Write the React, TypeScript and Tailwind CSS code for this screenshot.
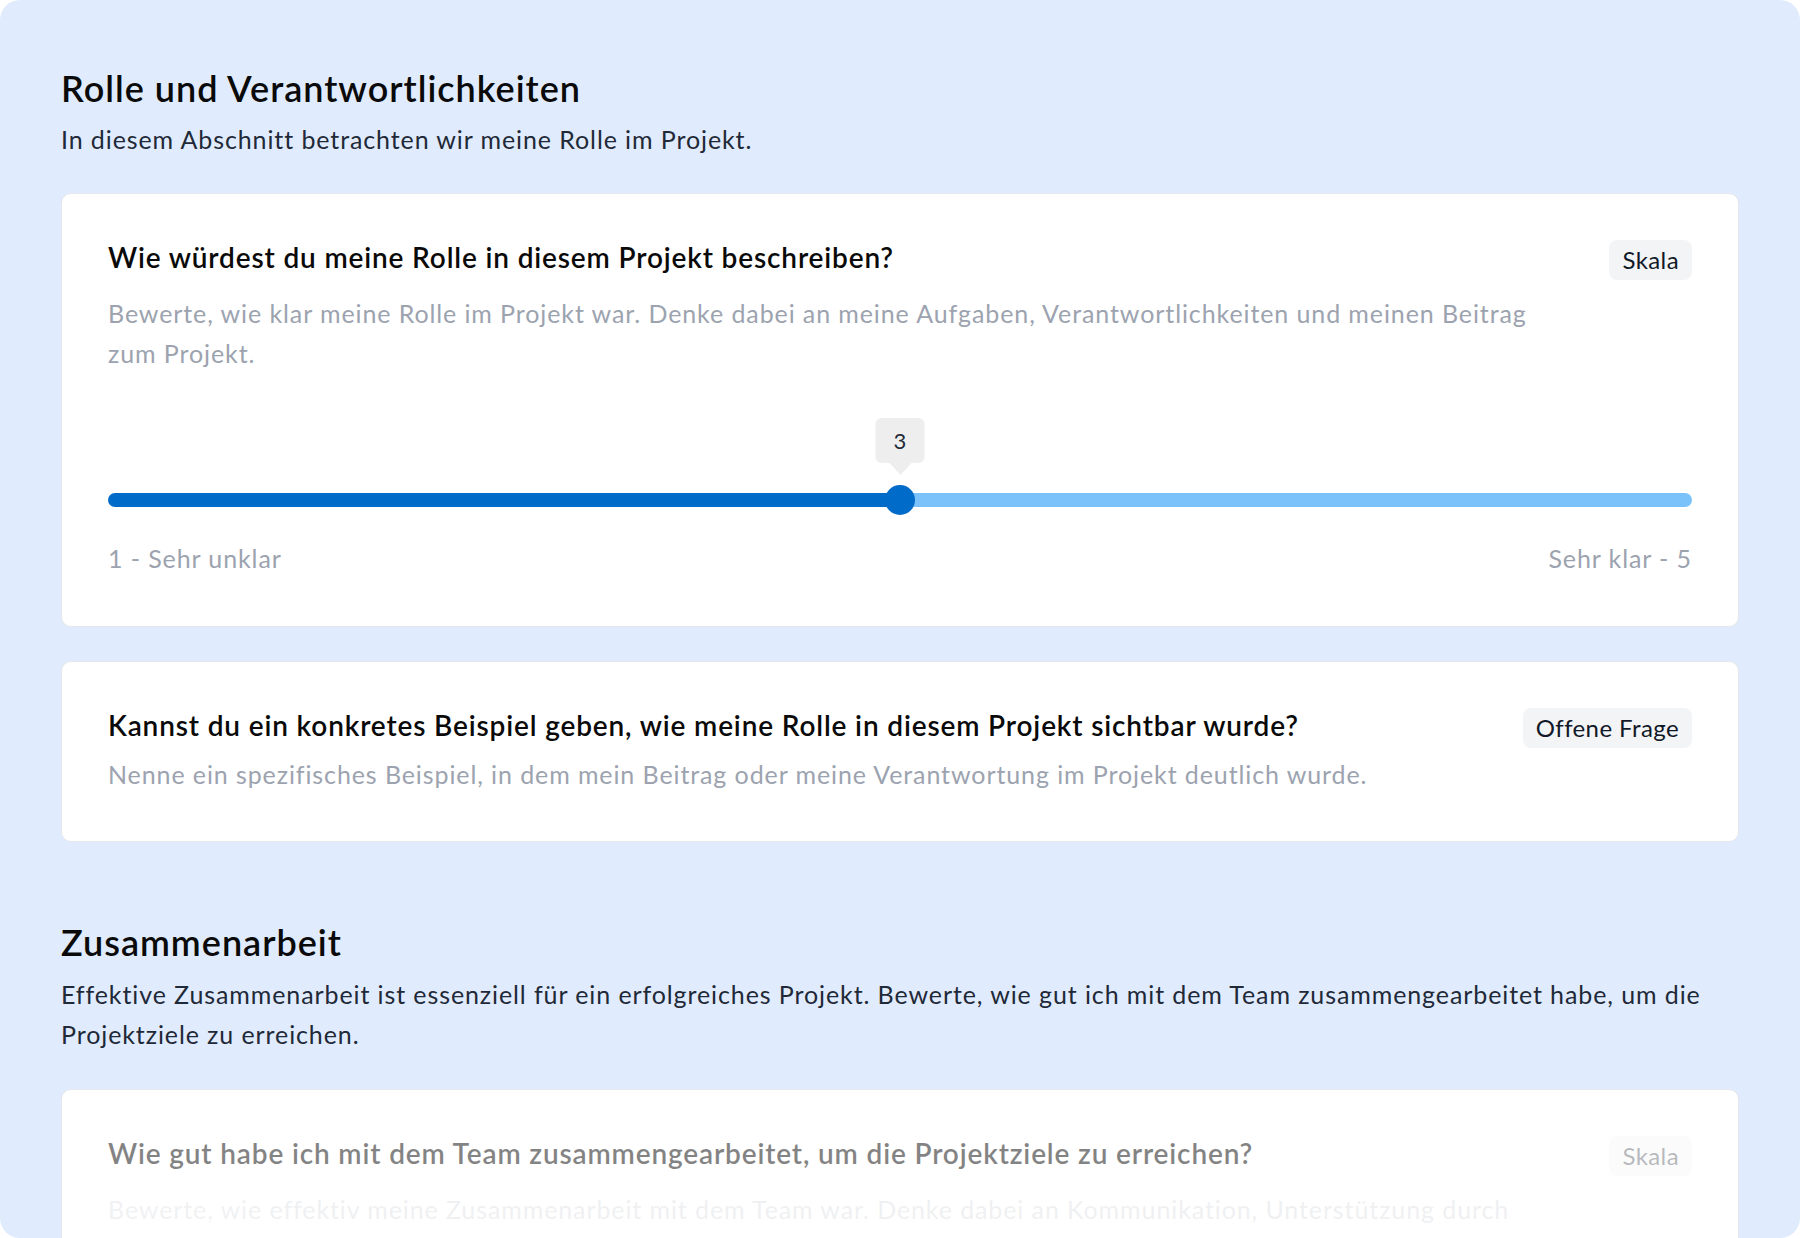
import React from "react";

function Badge({ label, className = "" }: { label: string; className?: string }) {
  return (
    <span
      className={
        "shrink-0 h-10 leading-[40px] px-[13px] rounded-lg bg-[#f3f4f6] text-[24px] tracking-[0.4px] text-[#111827] " +
        className
      }
    >
      {label}
    </span>
  );
}

function Slider() {
  return (
    <div className="relative mt-[112px] h-[30px] flex items-center">
      <div className="flex w-full h-[14px] rounded-full overflow-hidden">
        <div className="flex-1 bg-[#006bc9]" />
        <div className="flex-1 bg-[#7cc2fa]" />
      </div>
      <div className="absolute left-1/2 top-0 -translate-x-1/2 w-[30px] h-[30px] rounded-full bg-[#006bc9]" />
      <div className="absolute left-1/2 -translate-x-1/2 top-[-67px] flex flex-col items-center">
        <div className="w-[49px] h-[45px] rounded-md bg-[#eeeeee] flex items-center justify-center text-[22px] text-[#1f2937]">
          3
        </div>
        <div className="w-0 h-0 border-l-[11px] border-r-[11px] border-t-[12px] border-l-transparent border-r-transparent border-t-[#eeeeee]" />
      </div>
    </div>
  );
}

const body = "text-[25px] leading-[40px] tracking-[0.9px]";
const heading = "text-[36px] leading-[44px] font-semibold tracking-[1px] text-[#0a0a0a]";
const title = "text-[28px] leading-[34px] font-semibold tracking-[0.85px] text-[#0a0a0a]";
const card = "bg-white border border-[#e5e7eb] rounded-[10px] px-[46px] pt-[46px]";

export default function App() {
  return (
    <div className="w-[1800px] h-[1238px] bg-white font-['Lato',sans-serif]">
      <div className="h-full rounded-[20px] bg-[#e0ecfd] overflow-hidden px-[61px] pt-[66px]">
        <h1 className={heading}>Rolle und Verantwortlichkeiten</h1>
        <p className={"mt-[9px] text-[#1f2937] " + body}>
          In diesem Abschnitt betrachten wir meine Rolle im Projekt.
        </p>

        {/* Card 1 */}
        <div className={"mt-[34px] pb-[48px] " + card}>
          <div className="flex items-start justify-between gap-6">
            <h2 className={title}>Wie würdest du meine Rolle in diesem Projekt beschreiben?</h2>
            <Badge label="Skala" />
          </div>
          <p className={"mt-[13px] text-[#9ca3af] max-w-[1450px] " + body}>
            Bewerte, wie klar meine Rolle im Projekt war. Denke dabei an meine Aufgaben,
            Verantwortlichkeiten und meinen Beitrag zum Projekt.
          </p>
          <Slider />
          <div className={"mt-[23px] flex justify-between text-[#9ca3af] " + body}>
            <span>1 - Sehr unklar</span>
            <span>Sehr klar - 5</span>
          </div>
        </div>

        {/* Card 2 */}
        <div className={"mt-[34px] pb-[47px] " + card}>
          <div className="flex items-start justify-between gap-6">
            <h2 className={title}>
              Kannst du ein konkretes Beispiel geben, wie meine Rolle in diesem Projekt sichtbar wurde?
            </h2>
            <Badge label="Offene Frage" />
          </div>
          <p className={"mt-[6px] text-[#9ca3af] " + body}>
            Nenne ein spezifisches Beispiel, in dem mein Beitrag oder meine Verantwortung im Projekt deutlich wurde.
          </p>
        </div>

        <h1 className={"mt-[78px] " + heading}>Zusammenarbeit</h1>
        <p className={"mt-[10px] text-[#1f2937] " + body}>
          Effektive Zusammenarbeit ist essenziell für ein erfolgreiches Projekt. Bewerte, wie gut ich mit dem
          Team zusammengearbeitet habe, um die Projektziele zu erreichen.
        </p>

        {/* Card 3 (faded) */}
        <div className={"mt-[35px] pb-[48px] " + card}>
          <div className="flex items-start justify-between gap-6">
            <h2 className={title + " opacity-50"}>
              Wie gut habe ich mit dem Team zusammengearbeitet, um die Projektziele zu erreichen?
            </h2>
            <Badge label="Skala" className="opacity-30" />
          </div>
          <p className={"mt-[13px] text-[#9ca3af] opacity-15 max-w-[1450px] " + body}>
            Bewerte, wie effektiv meine Zusammenarbeit mit dem Team war. Denke dabei an Kommunikation,
            Unterstützung durch Kolleginnen und Kollegen und gemeinsames Arbeiten.
          </p>
        </div>
      </div>
    </div>
  );
}
